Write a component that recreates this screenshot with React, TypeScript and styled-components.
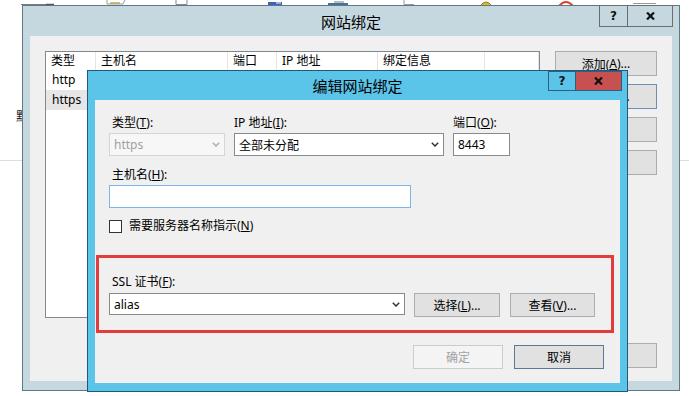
import React from "react";
import styled, { createGlobalStyle } from "styled-components";

const GlobalStyle = createGlobalStyle`
  html, body { margin: 0; padding: 0; background: #fff; }
  body {
    font-family: "Noto Sans", "Noto Sans CJK SC", sans-serif;
    font-size: 12px;
    color: #000;
  }
  * { box-sizing: border-box; }
`;

const FONT = `"Noto Sans", "Noto Sans CJK SC", sans-serif`;

const Desktop = styled.div`
  position: relative;
  width: 689px;
  height: 396px;
  overflow: hidden;
  background: #fff;
`;

const BackPage = styled.div`
  padding: 108px 0 0 16px;
`;
const BackGlyph = styled.div`
  font-family: "Noto Sans CJK SC", sans-serif;
  font-size: 12px;
  line-height: 16px;
  color: #222;
`;
const BackRule = styled.div`
  margin: 36px 0 0 -16px;
  width: 689px;
  height: 1px;
  background: #dedede;
`;

const DeskIcon = styled.div<{ $x: number; $w: number }>`
  position: absolute;
  top: 0;
  left: ${(p) => p.$x}px;
  width: ${(p) => p.$w}px;
  height: 6px;
  display: flex;
`;

/* ---------- outer window ---------- */
const OuterWindow = styled.div`
  position: absolute;
  left: 22px;
  top: 5px;
  width: 658px;
  height: 386px;
  background: #c6d8df;
  border: 1px solid #5d7a86;
  display: flex;
  flex-direction: column;
`;

const TitleBar = styled.div<{ $h: number }>`
  height: ${(p) => p.$h}px;
  display: grid;
  grid-template-columns: 1fr auto 1fr;
  align-items: center;
  flex: none;
`;

const TitleText = styled.div`
  grid-column: 2;
  font-family: "Noto Sans CJK SC", sans-serif;
  font-size: 15px;
  line-height: 18px;
  color: #000;
  padding-top: 1px;
`;

const CaptionGroup = styled.div<{ $mr: number; $mt: number }>`
  grid-column: 3;
  justify-self: end;
  align-self: start;
  display: flex;
  margin-right: ${(p) => p.$mr}px;
  margin-top: ${(p) => p.$mt}px;
`;

const CaptionBtn = styled.div<{ $w: number; $h: number; $bg: string; $bd: string }>`
  width: ${(p) => p.$w}px;
  height: ${(p) => p.$h}px;
  background: ${(p) => p.$bg};
  border: 1px solid ${(p) => p.$bd};
  & + & { border-left: none; }
  display: flex;
  align-items: center;
  justify-content: center;
  font-family: "DejaVu Sans", sans-serif;
  font-weight: bold;
  font-size: 12px;
  color: #111;
`;

const OuterContent = styled.div`
  flex: 1;
  margin: 0 7px 9px;
  background: #f0f0f0;
  padding: 15px 15px 13px;
  display: flex;
  gap: 15px;
`;

const ListView = styled.div`
  width: 495px;
  height: 267px;
  border: 1px solid #828790;
  background: #fff;
  flex: none;
`;

const COLS = "50px 132px 49px 101px 107px 1fr";

const ListHeader = styled.div`
  display: grid;
  grid-template-columns: ${COLS};
  height: 18px;
`;
const HeadCell = styled.div`
  padding-left: 5px;
  line-height: 18px;
  border-right: 1px solid #e5e5e5;
  font-family: ${FONT};
  white-space: nowrap;
`;
const ListRow = styled.div<{ $selected?: boolean }>`
  display: grid;
  grid-template-columns: ${COLS};
  height: 20px;
  line-height: 20px;
  background: ${(p) => (p.$selected ? "#e6e6e6" : "transparent")};
`;
const RowCell = styled.div`
  padding-left: 6px;
  white-space: nowrap;
`;

const SideButtons = styled.div`
  width: 102px;
  display: flex;
  flex-direction: column;
  gap: 8px;
`;

const Btn = styled.div<{ $w: number; $h: number; $kind?: "normal" | "default" | "disabled" | "focus"; $push?: boolean }>`
  width: ${(p) => p.$w}px;
  height: ${(p) => p.$h}px;
  flex: none;
  margin-top: ${(p) => (p.$push ? "auto" : "0")};
  display: flex;
  align-items: center;
  justify-content: center;
  font-family: ${FONT};
  font-size: 12px;
  white-space: nowrap;
  background: ${(p) => (p.$kind === "disabled" ? "#f4f4f4" : "#e1e1e1")};
  color: ${(p) => (p.$kind === "disabled" ? "#a3a3a3" : "#000")};
  border: 1px solid
    ${(p) =>
      p.$kind === "disabled"
        ? "#cccccc"
        : p.$kind === "default"
        ? "#5f7894"
        : p.$kind === "focus"
        ? "#6b8fb5"
        : "#adadad"};
`;

const Acc = styled.span`
  text-decoration: underline;
  text-underline-offset: 1px;
`;

/* ---------- dialog ---------- */
const Dialog = styled.div`
  position: absolute;
  left: 87px;
  top: 70px;
  width: 541px;
  height: 322px;
  background: #5bc4e9;
  border: 1px solid #24587a;
  display: flex;
  flex-direction: column;
`;

const DialogContent = styled.div`
  flex: 1;
  margin: 0 7px 8px;
  background: #f0f0f0;
  display: flex;
  flex-direction: column;
`;

const FieldRow = styled.div`
  display: flex;
  gap: 9px;
  margin: 15px 0 0 14px;
`;

const Field = styled.div<{ $w: number }>`
  width: ${(p) => p.$w}px;
  display: flex;
  flex-direction: column;
`;

const Label = styled.div<{ $pl?: number; $mb?: number }>`
  height: 16px;
  line-height: 16px;
  margin-bottom: ${(p) => p.$mb ?? 2}px;
  padding-left: ${(p) => p.$pl ?? 0}px;
  white-space: nowrap;
`;

const Combo = styled.div<{ $w?: number; $h: number; $disabled?: boolean }>`
  width: ${(p) => (p.$w ? `${p.$w}px` : "100%")};
  height: ${(p) => p.$h}px;
  flex: none;
  display: flex;
  align-items: center;
  justify-content: space-between;
  padding: 0 4px 0 4px;
  background: ${(p) => (p.$disabled ? "#f7f7f7" : "#fff")};
  border: 1px solid ${(p) => (p.$disabled ? "#d5d5d5" : "#8a8a8a")};
  color: ${(p) => (p.$disabled ? "#a0a0a0" : "#000")};
  white-space: nowrap;
`;

const TextBox = styled.div<{ $w?: number; $focused?: boolean }>`
  width: ${(p) => (p.$w ? `${p.$w}px` : "100%")};
  height: 23px;
  flex: none;
  display: flex;
  align-items: center;
  padding-left: 4px;
  background: #fff;
  border: 1px solid ${(p) => (p.$focused ? "#7eb4ea" : "#8a8a8a")};
`;

const Section = styled.div<{ $mt: number }>`
  margin: ${(p) => p.$mt}px 0 0 14px;
  display: flex;
  flex-direction: column;
`;

const CheckRow = styled.div`
  margin: 9px 0 0 14px;
  height: 16px;
  display: flex;
  align-items: center;
  gap: 7px;
`;

const CheckBox = styled.div`
  width: 13px;
  height: 13px;
  border: 1px solid #333;
  background: #fff;
  margin-top: 2px;
`;

const RedFrame = styled.div`
  margin: 22px 6px 0 1px;
  border: 3px solid #e23c3d;
  padding: 16px 0 13px 10px;
  display: flex;
  flex-direction: column;
`;

const CertRow = styled.div`
  display: flex;
  align-items: flex-start;
`;

const Gap = styled.div<{ $w: number }>`
  width: ${(p) => p.$w}px;
  flex: none;
`;

const FooterRow = styled.div`
  margin-top: 12px;
  padding-right: 16px;
  display: flex;
  justify-content: flex-end;
  gap: 11px;
`;

const Chevron = ({ color = "#333" }: { color?: string }) => (
  <svg width="8" height="5" viewBox="0 0 8 5">
    <path d="M0.8 0.8 L4 4 L7.2 0.8" fill="none" stroke={color} strokeWidth="1.5" />
  </svg>
);

const CloseX = () => (
  <svg width="9" height="8" viewBox="0 0 9 8">
    <path d="M1 0.5 L8 7.5 M8 0.5 L1 7.5" stroke="#111" strokeWidth="2.2" />
  </svg>
);

export default function App() {
  return (
    <>
      <GlobalStyle />
      <Desktop>
        <BackPage>
          <BackGlyph>默</BackGlyph>
          <BackRule />
        </BackPage>

        <DeskIcon $x={20} $w={36}>
          <svg width="36" height="6">
            <path d="M1 4.5 H34" stroke="#7a7a7a" strokeWidth="1" />
            <path d="M26 4.5 H34" stroke="#555" strokeWidth="1.5" />
          </svg>
        </DeskIcon>
        <DeskIcon $x={106} $w={20}>
          <svg width="20" height="6">
            <path d="M1 0 V4 H17 L19 0" fill="none" stroke="#9a9a9a" />
            <path d="M4 3 H14" stroke="#b9a55a" strokeWidth="1.5" />
          </svg>
        </DeskIcon>
        <DeskIcon $x={175} $w={14}>
          <svg width="14" height="6">
            <path d="M1 0 V4.5 H12 V0" fill="none" stroke="#8a8a8a" />
          </svg>
        </DeskIcon>
        <DeskIcon $x={267} $w={16}>
          <svg width="16" height="6">
            <rect x="1" y="2" width="14" height="3" fill="#3f64b5" />
            <rect x="9" y="2" width="5" height="2" fill="#9db3de" />
          </svg>
        </DeskIcon>
        <DeskIcon $x={326} $w={24}>
          <svg width="24" height="6">
            <path d="M2 4 H22" stroke="#4e6e92" strokeWidth="2" />
            <path d="M8 2 H18" stroke="#8fa9c4" strokeWidth="1.5" />
          </svg>
        </DeskIcon>
        <DeskIcon $x={403} $w={12}>
          <svg width="12" height="6">
            <path d="M1 0 V4.5 H11" fill="none" stroke="#999" />
          </svg>
        </DeskIcon>
        <DeskIcon $x={479} $w={14}>
          <svg width="14" height="6">
            <path d="M1 6 Q7 -2 13 6" fill="#e0b530" stroke="#a07a10" />
          </svg>
        </DeskIcon>
        <DeskIcon $x={558} $w={16}>
          <svg width="16" height="6">
            <path d="M1 6 Q8 -2 15 6" fill="none" stroke="#d9462e" strokeWidth="2" />
          </svg>
        </DeskIcon>
        <DeskIcon $x={632} $w={26}>
          <svg width="26" height="6">
            <path d="M1 3.5 H24" stroke="#9a9a9a" />
          </svg>
        </DeskIcon>

        <OuterWindow>
          <TitleBar $h={30}>
            <TitleText>网站绑定</TitleText>
            <CaptionGroup $mr={6} $mt={-1}>
              <CaptionBtn $w={29} $h={22} $bg="#c6d8df" $bd="#6d6d6d">?</CaptionBtn>
              <CaptionBtn $w={45} $h={22} $bg="#c6d8df" $bd="#6d6d6d">
                <CloseX />
              </CaptionBtn>
            </CaptionGroup>
          </TitleBar>
          <OuterContent>
            <ListView>
              <ListHeader>
                <HeadCell>类型</HeadCell>
                <HeadCell>主机名</HeadCell>
                <HeadCell>端口</HeadCell>
                <HeadCell>IP 地址</HeadCell>
                <HeadCell>绑定信息</HeadCell>
                <HeadCell />
              </ListHeader>
              <ListRow>
                <RowCell>http</RowCell>
                <RowCell />
                <RowCell>80</RowCell>
                <RowCell>*</RowCell>
                <RowCell />
                <RowCell />
              </ListRow>
              <ListRow $selected>
                <RowCell>https</RowCell>
                <RowCell />
                <RowCell>8443</RowCell>
                <RowCell>*</RowCell>
                <RowCell />
                <RowCell />
              </ListRow>
            </ListView>
            <SideButtons>
              <Btn $w={102} $h={25}>
                添加(<Acc>A</Acc>)...
              </Btn>
              <Btn $w={102} $h={25} $kind="focus">
                编辑(<Acc>E</Acc>)...
              </Btn>
              <Btn $w={102} $h={25}>
                删除(<Acc>R</Acc>)
              </Btn>
              <Btn $w={102} $h={25}>
                浏览(<Acc>B</Acc>)
              </Btn>
              <Btn $w={102} $h={25} $push>
                关闭(<Acc>C</Acc>)
              </Btn>
            </SideButtons>
          </OuterContent>
        </OuterWindow>

        <Dialog>
          <TitleBar $h={29}>
            <TitleText>编辑网站绑定</TitleText>
            <CaptionGroup $mr={5} $mt={0}>
              <CaptionBtn $w={28} $h={20} $bg="#5bc4e9" $bd="#2c5f80">?</CaptionBtn>
              <CaptionBtn $w={46} $h={20} $bg="#c75050" $bd="#2c5f80">
                <CloseX />
              </CaptionBtn>
            </CaptionGroup>
          </TitleBar>
          <DialogContent>
            <FieldRow>
              <Field $w={116}>
                <Label $pl={3}>
                  类型(<Acc>T</Acc>):
                </Label>
                <Combo $h={23} $disabled>
                  <span>https</span>
                  <Chevron color="#b0b0b0" />
                </Combo>
              </Field>
              <Field $w={210}>
                <Label $pl={0}>
                  IP 地址(<Acc>I</Acc>):
                </Label>
                <Combo $h={23}>
                  <span>全部未分配</span>
                  <Chevron />
                </Combo>
              </Field>
              <Field $w={57}>
                <Label $pl={0}>
                  端口(<Acc>O</Acc>):
                </Label>
                <TextBox>8443</TextBox>
              </Field>
            </FieldRow>

            <Section $mt={11}>
              <Label $pl={3}>
                主机名(<Acc>H</Acc>):
              </Label>
              <TextBox $w={302} $focused />
            </Section>

            <CheckRow>
              <CheckBox />
              <span>
                需要服务器名称指示(<Acc>N</Acc>)
              </span>
            </CheckRow>

            <RedFrame>
              <Label $pl={3} $mb={3}>
                SSL 证书(<Acc>F</Acc>):
              </Label>
              <CertRow>
                <Combo $w={296} $h={22}>
                  <span>alias</span>
                  <Chevron />
                </Combo>
                <Gap $w={9} />
                <Btn $w={86} $h={24}>
                  选择(<Acc>L</Acc>)...
                </Btn>
                <Gap $w={10} />
                <Btn $w={85} $h={24}>
                  查看(<Acc>V</Acc>)...
                </Btn>
              </CertRow>
            </RedFrame>

            <FooterRow>
              <Btn $w={90} $h={24} $kind="disabled">
                确定
              </Btn>
              <Btn $w={90} $h={24} $kind="default">
                取消
              </Btn>
            </FooterRow>
          </DialogContent>
        </Dialog>
      </Desktop>
    </>
  );
}
